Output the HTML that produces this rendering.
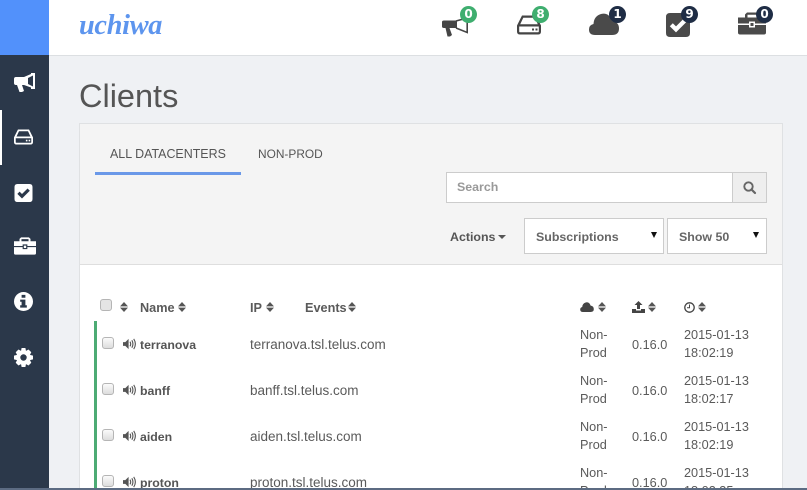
<!DOCTYPE html>
<html><head><meta charset="utf-8"><title>Clients</title>
<style>
*{box-sizing:border-box}
html,body{margin:0;padding:0;width:807px;height:490px;overflow:hidden}
body{background:#eff1f4;font-family:"Liberation Sans",sans-serif;color:#555}
#w{position:absolute;left:0;top:0;width:807px;height:490px;overflow:hidden;contain:paint}
.a{position:absolute;white-space:nowrap}
.b{font-weight:bold}
svg{position:absolute;overflow:visible}
.badge{position:absolute;width:17px;height:17px;border-radius:50%;color:#fff;font:bold 12px/17px "DejaVu Sans",sans-serif;text-align:center}
.g{background:#3fae6f}.n{background:#1f2d45}
.cb{position:absolute;width:12px;height:12px;border:1px solid #b5b5b5;border-radius:3px;background:linear-gradient(#fafafa,#dcdcdc)}
.t{font-size:12.7px;color:#5a5a5a}
.u{font-size:13.5px;color:#5a5a5a}
.nm{font-size:12.3px;color:#555;font-weight:bold}
.sel{position:absolute;top:218px;height:36px;background:#fff;border:1px solid #ccc;font-weight:bold;font-size:12.4px;color:#666;line-height:36px;padding-left:11px}
.sel i{position:absolute;top:13px;width:0;height:0;border-left:3.5px solid transparent;border-right:3.5px solid transparent;border-top:6px solid #111}
</style></head><body>
<svg width="0" height="0" style="position:absolute">
<defs>
<symbol id="horn" viewBox="0 0 21 19"><path fill-rule="evenodd" d="M0 6Q0 4 2 4H10L17 1V0H21V16H17V14.500L10 12H8L10 18 8 19H5.500L3 12H2Q0 12 0 10ZM19 2.500L14 5V11L19 13.500Z"/></symbol>
<symbol id="horn2" viewBox="0 0 26 20"><path d="M0 5Q0 3.500 2 3.500H15V11H7.500L10 18 8 19.500H5.500L3.500 11H2Q0 11 0 9.500Z"/><path d="M14 4L25.200 1V15.500L14 11" fill="none" stroke="#454545" stroke-width="1.600"/></symbol>
<symbol id="hdd" viewBox="0 0 24 19"><path fill-rule="evenodd" d="M5 0H19L24 10V16Q24 19 21 19H3Q0 19 0 16V10ZM6.300 2.200L3.200 8.800H20.800L17.700 2.200ZM2.200 11V16Q2.200 16.800 3 16.800H21Q21.800 16.800 21.800 16V11ZM15 13H17V15H15ZM18.500 13H20.500V15H18.500Z"/></symbol>
<symbol id="cloud" viewBox="0 0 30 22"><path d="M6 22Q0 22 0 16.500 0 12 4.500 11 5 3 12 1 20-1 23 8 30 9 30 15.500 30 22 23 22Z"/></symbol>
<symbol id="check" viewBox="0 0 24 24"><path fill-rule="evenodd" d="M4 0H20Q24 0 24 4V20Q24 24 20 24H4Q0 24 0 20V4Q0 0 4 0ZM6.800 10.200L3.800 13.200 10 19.400 20.400 9 17.400 6 10 13.400Z"/></symbol>
<symbol id="case" viewBox="0 0 28 22"><path fill-rule="evenodd" d="M9 0H19L21 2V5H28V11H17V9H11V11H0V5H7V2ZM9.500 2.200V5H18.500V2.200ZM0 12.500H11V15H17V12.500H28V20Q28 22 26 22H2Q0 22 0 20ZM12.500 10.500H15.500V13.500H12.500Z"/></symbol>
<symbol id="info" viewBox="0 0 20 20"><path fill-rule="evenodd" d="M10 0A10 10 0 1 1 10 20 10 10 0 0 1 10 0ZM8 3V6H12V3ZM6.500 8V10.200H8V14H6.500V16.400H13.500V14H12V8Z"/></symbol>
<symbol id="gear" viewBox="0 0 20 20"><path fill-rule="evenodd" d="M8 0H12L12.600 3 15.300 1.600 18.200 4.500 16.800 7.200 20 8V12L16.800 12.800 18.200 15.500 15.300 18.400 12.600 17 12 20H8L7.400 17 4.700 18.400 1.800 15.500 3.200 12.800 0 12V8L3.200 7.200 1.800 4.500 4.700 1.600 7.400 3ZM10 6.600A3.400 3.400 0 1 0 10 13.400 3.400 3.400 0 0 0 10 6.600Z"/></symbol>
<symbol id="sort" viewBox="0 0 8 10" preserveAspectRatio="none"><path d="M4 0L8 4.400H0ZM0 5.600H8L4 10Z"/></symbol>
<symbol id="spk" viewBox="0 0 15 12"><path d="M0 4H2.500L6 .5V11.500L2.500 8H0Z"/><path d="M7.500 3.500Q9 6 7.500 8.500M9.500 2Q11.800 6 9.500 10M11.500 .5Q15 6 11.500 11.500" fill="none" stroke="#555" stroke-width="1.200"/></symbol>
</defs></svg>
<div id="w">

<!-- top bar -->
<div class="a" style="left:0;top:0;width:807px;height:56px;background:#fff;border-bottom:1px solid #dcdfe2"></div>
<div class="a" style="left:0;top:0;width:49px;height:55px;background:#5291fb"></div>
<div class="a" style="left:79px;top:8px;font:italic bold 28.300px/36px 'Liberation Serif',serif;color:#5d95ee;letter-spacing:-.3px">uchiwa</div>

<svg style="left:442px;top:17px;fill:#454545" width="26" height="20"><use href="#horn2"/></svg>
<div class="badge g" style="left:460px;top:6px">0</div>
<svg style="left:517px;top:15px;fill:#454545" width="24" height="20"><use href="#hdd"/></svg>
<div class="badge g" style="left:532px;top:6px">8</div>
<svg style="left:589px;top:13px;fill:#4a4a4a" width="30" height="22"><use href="#cloud"/></svg>
<div class="badge n" style="left:609px;top:6px">1</div>
<svg style="left:666px;top:13px;fill:#4a4a4a" width="24" height="24"><use href="#check"/></svg>
<div class="badge n" style="left:681px;top:6px">9</div>
<svg style="left:738px;top:12px;fill:#4a4a4a" width="28" height="23"><use href="#case"/></svg>
<div class="badge n" style="left:756px;top:6px">0</div>

<!-- sidebar -->
<div class="a" style="left:0;top:55px;width:49px;height:435px;background:#2b384a"></div>
<div class="a" style="left:0;top:110px;width:2px;height:55px;background:#fff"></div>
<svg style="left:14px;top:73px;fill:#fff" width="21" height="19"><use href="#horn"/></svg>
<svg style="left:14px;top:129px;fill:#fff" width="19" height="16"><use href="#hdd"/></svg>
<svg style="left:14px;top:184px;fill:#fff" width="19" height="18"><use href="#check"/></svg>
<svg style="left:14px;top:236px;fill:#fff" width="22" height="20"><use href="#case"/></svg>
<svg style="left:14px;top:292px;fill:#fff" width="19" height="19"><use href="#info"/></svg>
<svg style="left:14px;top:348px;fill:#fff" width="19" height="19"><use href="#gear"/></svg>

<div class="a" style="left:79px;top:76px;font-size:32.500px;line-height:40px;color:#555">Clients</div>

<!-- panel -->
<div class="a" style="left:79px;top:123px;width:704px;height:367px;background:#fff;border:1px solid #dfe1e3;border-bottom:0"></div>
<div class="a" style="left:80px;top:124px;width:702px;height:141px;background:#f4f4f4;border-bottom:1px solid #dedede"></div>
<div class="a" style="left:110px;top:146px;font-size:12.450px;line-height:16px;color:#555">ALL DATACENTERS</div>
<div class="a" style="left:258px;top:146px;font-size:11.900px;line-height:16px;color:#555">NON-PROD</div>
<div class="a" style="left:95px;top:172px;width:146px;height:3px;background:#6a98e8"></div>

<div class="a" style="left:446px;top:172px;width:321px;height:31px;background:#fff;border:1px solid #ccc;font-weight:bold;font-size:12.400px;line-height:29px;color:#999;padding-left:10px">Search</div>
<div class="a" style="left:732px;top:172px;width:35px;height:31px;background:#eeeeee;border:1px solid #ccc"></div>
<svg style="left:743px;top:181px" width="13" height="13" viewBox="0 0 13 13"><circle cx="5.500" cy="5.500" r="4.200" fill="none" stroke="#666" stroke-width="1.900"/><path d="M8.500 8.500L12 12" stroke="#666" stroke-width="2.200" stroke-linecap="round"/></svg>

<div class="a b" style="left:450px;top:229px;font-size:12.400px;line-height:16px;color:#555">Actions</div>
<div class="a" style="left:498px;top:235px;width:0;height:0;border-left:4px solid transparent;border-right:4px solid transparent;border-top:4px solid #555"></div>
<div class="sel" style="left:524px;width:140px">Subscriptions<i style="left:126px"></i></div>
<div class="sel" style="left:667px;width:100px">Show 50<i style="left:85px"></i></div>

<!-- table head -->
<div class="cb" style="left:100px;top:299px;background:#e4e4e4"></div>
<svg style="left:120px;top:302px;fill:#555" width="8" height="10"><use href="#sort"/></svg>
<div class="a b t" style="left:140px;top:300px;line-height:16px">Name</div>
<svg style="left:178px;top:302px;fill:#555" width="8" height="10"><use href="#sort"/></svg>
<div class="a b t" style="left:250px;top:300px;line-height:16px">IP</div>
<svg style="left:266px;top:302px;fill:#555" width="8" height="10"><use href="#sort"/></svg>
<div class="a b t" style="left:305px;top:300px;line-height:16px">Events</div>
<svg style="left:348px;top:302px;fill:#555" width="8" height="10"><use href="#sort"/></svg>
<svg style="left:580px;top:302px;fill:#444" width="14" height="10"><use href="#cloud"/></svg>
<svg style="left:598px;top:302px;fill:#555" width="8" height="10"><use href="#sort"/></svg>
<svg style="left:632px;top:301px" width="13" height="12" viewBox="0 0 13 12"><path d="M6.500 0L10.500 4H8V8H5V4H2.500ZM0 8H4V9.500H9V8H13V12H0Z" fill="#444"/></svg>
<svg style="left:648px;top:302px;fill:#555" width="8" height="10"><use href="#sort"/></svg>
<svg style="left:684px;top:302px" width="11" height="11" viewBox="0 0 11 11"><circle cx="5.500" cy="5.500" r="4.700" fill="none" stroke="#444" stroke-width="1.300"/><path d="M5.500 2.500V5.800H3" fill="none" stroke="#444"/></svg>
<svg style="left:698px;top:302px;fill:#555" width="8" height="10"><use href="#sort"/></svg>

<div class="a" style="left:94px;top:321px;width:3px;height:169px;background:#4dab74"></div>

<!-- rows -->
<div class="cb" style="left:102px;top:337px"></div>
<svg style="left:123px;top:338px;fill:#555" width="14" height="12"><use href="#spk"/></svg>
<div class="a nm" style="left:140px;top:337px;line-height:16px">terranova</div>
<div class="a u" style="left:250px;top:337px;line-height:16px">terranova.tsl.telus.com</div>
<div class="a t" style="left:580px;top:326px;line-height:18px">Non-<br>Prod</div>
<div class="a t" style="left:632px;top:337px;line-height:16px">0.16.0</div>
<div class="a t" style="left:684px;top:326px;line-height:18px">2015-01-13<br>18:02:19</div>

<div class="cb" style="left:102px;top:383px"></div>
<svg style="left:123px;top:384px;fill:#555" width="14" height="12"><use href="#spk"/></svg>
<div class="a nm" style="left:140px;top:383px;line-height:16px">banff</div>
<div class="a u" style="left:250px;top:383px;line-height:16px">banff.tsl.telus.com</div>
<div class="a t" style="left:580px;top:372px;line-height:18px">Non-<br>Prod</div>
<div class="a t" style="left:632px;top:383px;line-height:16px">0.16.0</div>
<div class="a t" style="left:684px;top:372px;line-height:18px">2015-01-13<br>18:02:17</div>

<div class="cb" style="left:102px;top:429px"></div>
<svg style="left:123px;top:430px;fill:#555" width="14" height="12"><use href="#spk"/></svg>
<div class="a nm" style="left:140px;top:429px;line-height:16px">aiden</div>
<div class="a u" style="left:250px;top:429px;line-height:16px">aiden.tsl.telus.com</div>
<div class="a t" style="left:580px;top:418px;line-height:18px">Non-<br>Prod</div>
<div class="a t" style="left:632px;top:429px;line-height:16px">0.16.0</div>
<div class="a t" style="left:684px;top:418px;line-height:18px">2015-01-13<br>18:02:19</div>

<div class="cb" style="left:102px;top:475px"></div>
<svg style="left:123px;top:476px;fill:#555" width="14" height="12"><use href="#spk"/></svg>
<div class="a nm" style="left:140px;top:475px;line-height:16px">proton</div>
<div class="a u" style="left:250px;top:475px;line-height:16px">proton.tsl.telus.com</div>
<div class="a t" style="left:580px;top:464px;line-height:18px">Non-<br>Prod</div>
<div class="a t" style="left:632px;top:475px;line-height:16px">0.16.0</div>
<div class="a t" style="left:684px;top:464px;line-height:18px">2015-01-13<br>18:02:35</div>

<div class="a" style="left:0;top:488px;width:807px;height:2px;background:#5c6b82"></div>
</div>
</body></html>
